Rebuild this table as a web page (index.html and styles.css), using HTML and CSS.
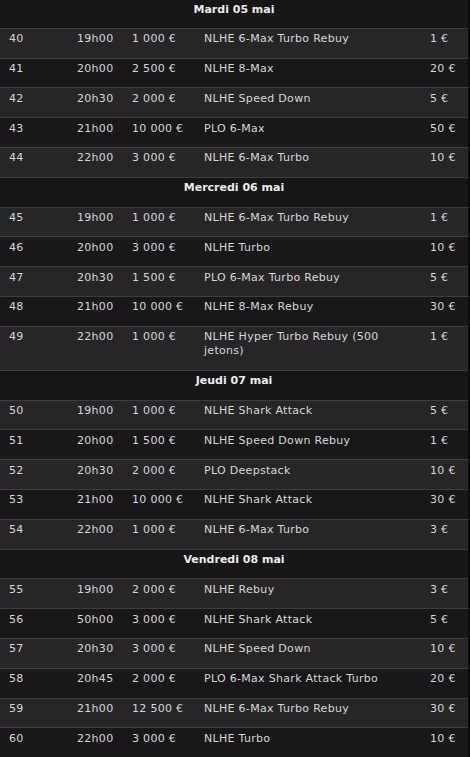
FILE: index.html
```html
<!DOCTYPE html>
<html lang="fr">
<head>
<meta charset="utf-8">
<title>Programme</title>
<link rel="stylesheet" href="styles.css">
</head>
<body>
<div class="schedule">
  <div class="day first">Mardi 05 mai</div>
  <div class="row light"><span>40</span><span>19h00</span><span>1 000 €</span><span class="name">NLHE 6-Max Turbo Rebuy</span><span>1 €</span></div>
  <div class="row dark"><span>41</span><span>20h00</span><span>2 500 €</span><span class="name">NLHE 8-Max</span><span>20 €</span></div>
  <div class="row light"><span>42</span><span>20h30</span><span>2 000 €</span><span class="name">NLHE Speed Down</span><span>5 €</span></div>
  <div class="row dark"><span>43</span><span>21h00</span><span>10 000 €</span><span class="name">PLO 6-Max</span><span>50 €</span></div>
  <div class="row light"><span>44</span><span>22h00</span><span>3 000 €</span><span class="name">NLHE 6-Max Turbo</span><span>10 €</span></div>

  <div class="day">Mercredi 06 mai</div>
  <div class="row light"><span>45</span><span>19h00</span><span>1 000 €</span><span class="name">NLHE 6-Max Turbo Rebuy</span><span>1 €</span></div>
  <div class="row dark"><span>46</span><span>20h00</span><span>3 000 €</span><span class="name">NLHE Turbo</span><span>10 €</span></div>
  <div class="row light"><span>47</span><span>20h30</span><span>1 500 €</span><span class="name">PLO 6-Max Turbo Rebuy</span><span>5 €</span></div>
  <div class="row dark"><span>48</span><span>21h00</span><span>10 000 €</span><span class="name">NLHE 8-Max Rebuy</span><span>30 €</span></div>
  <div class="row light"><span>49</span><span>22h00</span><span>1 000 €</span><span class="name">NLHE Hyper Turbo Rebuy (500 jetons)</span><span>1 €</span></div>

  <div class="day">Jeudi 07 mai</div>
  <div class="row light"><span>50</span><span>19h00</span><span>1 000 €</span><span class="name">NLHE Shark Attack</span><span>5 €</span></div>
  <div class="row dark"><span>51</span><span>20h00</span><span>1 500 €</span><span class="name">NLHE Speed Down Rebuy</span><span>1 €</span></div>
  <div class="row light"><span>52</span><span>20h30</span><span>2 000 €</span><span class="name">PLO Deepstack</span><span>10 €</span></div>
  <div class="row dark"><span>53</span><span>21h00</span><span>10 000 €</span><span class="name">NLHE Shark Attack</span><span>30 €</span></div>
  <div class="row light"><span>54</span><span>22h00</span><span>1 000 €</span><span class="name">NLHE 6-Max Turbo</span><span>3 €</span></div>

  <div class="day">Vendredi 08 mai</div>
  <div class="row light"><span>55</span><span>19h00</span><span>2 000 €</span><span class="name">NLHE Rebuy</span><span>3 €</span></div>
  <div class="row dark"><span>56</span><span>50h00</span><span>3 000 €</span><span class="name">NLHE Shark Attack</span><span>5 €</span></div>
  <div class="row light"><span>57</span><span>20h30</span><span>3 000 €</span><span class="name">NLHE Speed Down</span><span>10 €</span></div>
  <div class="row dark"><span>58</span><span>20h45</span><span>2 000 €</span><span class="name">PLO 6-Max Shark Attack Turbo</span><span>20 €</span></div>
  <div class="row light"><span>59</span><span>21h00</span><span>12 500 €</span><span class="name">NLHE 6-Max Turbo Rebuy</span><span>30 €</span></div>
  <div class="row dark last"><span>60</span><span>22h00</span><span>3 000 €</span><span class="name">NLHE Turbo</span><span>10 €</span></div>
</div>
</body>
</html>
```
FILE: styles.css
```css
html, body {
  margin: 0;
  padding: 0;
  background: #0f0f0f;
}

body {
  font-family: "DejaVu Sans", Verdana, sans-serif;
  font-size: 11px;
  color: #d6d6d6;
}

.schedule {
  width: 468px;
  border-right: 2px solid #0c0c0c;
}

.day {
  background: #161616;
  color: #ececec;
  font-weight: bold;
  text-align: center;
  line-height: 14.2px;
  padding: 3.5px 0 11.1px;
  border-top: 1px solid #3e3e3e;
}

.day.first {
  border-top: none;
  padding-top: 2.5px;
}

.row {
  display: grid;
  grid-template-columns: 68px 55px 72px 226px 38px;
  padding: 3.5px 0 11.1px 9px;
  line-height: 14.2px;
  letter-spacing: 0.3px;
  border-top: 1px solid #3e3e3e;
}

.row.light {
  background: #262626;
}

.row.dark {
  background: #181818;
}

.row.last {
  border-bottom: 1px solid #3e3e3e;
}

.name {
  padding-right: 20px;
}
```
